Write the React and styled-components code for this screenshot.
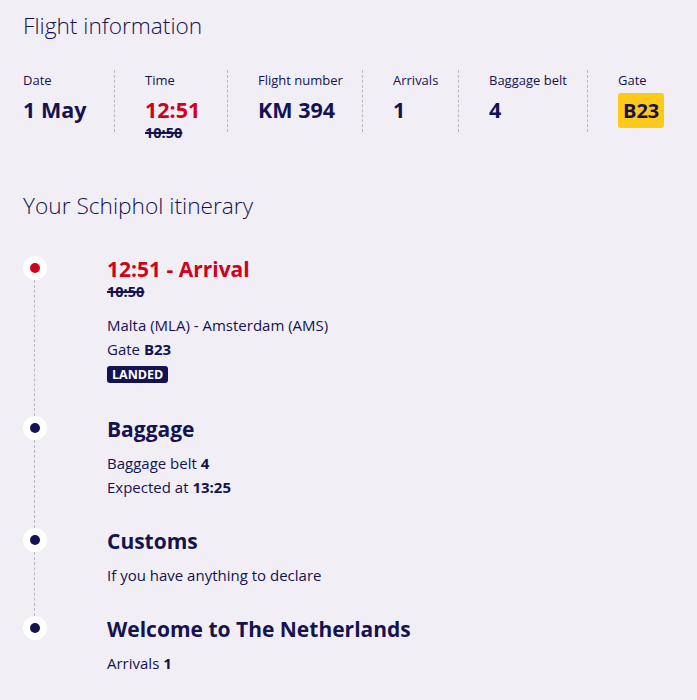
import React from 'react';
import styled, { createGlobalStyle } from 'styled-components';

const GlobalStyle = createGlobalStyle`
  body {
    margin: 0;
    background: #f1eff5;
    color: #141251;
    font-family: 'Open Sans', 'Noto Sans', sans-serif;
  }
`;

const Page = styled.div`
  padding: 10px 23px 24px;
`;

const SectionTitle = styled.h2`
  margin: 0;
  font-size: 22.7px;
  line-height: 32px;
  font-weight: 350;
  color: #141251;
`;

const Stats = styled.div`
  display: grid;
  grid-template-columns: 91px 113px 135px 96px 129px auto;
  margin: 28px 0 48px;
`;

const Stat = styled.div`
  position: relative;
  padding-left: ${(p) => (p.$first ? '0' : '31px')};

  &::before {
    content: '';
    display: ${(p) => (p.$first ? 'none' : 'block')};
    position: absolute;
    left: 0;
    top: 0;
    height: 62px;
    border-left: 1px dashed #b9b7c8;
  }
`;

const Label = styled.div`
  font-size: 13px;
  line-height: 20px;
`;

const Value = styled.div`
  margin-top: 6px;
  font-size: 21.5px;
  line-height: 28px;
  font-weight: 700;
  color: ${(p) => (p.$delayed ? '#d0021b' : '#141251')};
`;

const OldTime = styled.div`
  font-size: 14.5px;
  line-height: 18px;
  font-weight: 700;
  text-decoration: line-through;
  text-decoration-thickness: 2px;
`;

const GateBadge = styled.span`
  display: inline-block;
  margin-top: -4px;
  padding: 4px 5px;
  line-height: 27px;
  font-size: 20px;
  background: #ffc917;
  border-radius: 3px;
`;

const Timeline = styled.div`
  margin-top: 33px;
`;

const Step = styled.div`
  display: grid;
  grid-template-columns: 84px 1fr;
  padding-bottom: ${(p) => (p.$last ? '0' : '28px')};
`;

const Rail = styled.div`
  position: relative;

  &::after {
    content: '';
    display: ${(p) => (p.$last ? 'none' : 'block')};
    position: absolute;
    left: 11px;
    top: 25px;
    bottom: -29px;
    border-left: 1px dashed #b9b7c8;
  }
`;

const Dot = styled.div`
  margin-top: 1px;
  width: 24px;
  height: 24px;
  border-radius: 50%;
  background: #ffffff;
  display: flex;
  align-items: center;
  justify-content: center;

  &::before {
    content: '';
    width: 10px;
    height: 10px;
    border-radius: 50%;
    background: ${(p) => (p.$active ? '#d0021b' : '#141251')};
  }
`;

const StepTitle = styled.h3`
  margin: 0;
  font-size: 21px;
  line-height: 28px;
  font-weight: 700;
  color: ${(p) => (p.$active ? '#d0021b' : '#141251')};
`;

const StepBody = styled.div`
  margin-top: ${(p) => (p.$tight ? '12px' : '8px')};
  font-size: 15px;
  line-height: 24px;

  b {
    font-weight: 700;
  }
`;

const Status = styled.span`
  display: inline-block;
  margin-top: 5px;
  margin-bottom: 4px;
  padding: 0 5px;
  background: #141251;
  color: #ffffff;
  font-size: 12.5px;
  font-weight: 700;
  line-height: 17px;
  border-radius: 3px;
`;

const stats = [
  { label: 'Date', value: '1 May' },
  { label: 'Time', value: '12:51', old: '10:50', delayed: true },
  { label: 'Flight number', value: 'KM 394' },
  { label: 'Arrivals', value: '1' },
  { label: 'Baggage belt', value: '4' },
  { label: 'Gate', value: 'B23', badge: true },
];

export default function App() {
  return (
    <Page>
      <GlobalStyle />
      <SectionTitle>Flight information</SectionTitle>
      <Stats>
        {stats.map((s, i) => (
          <Stat key={s.label} $first={i === 0}>
            <Label>{s.label}</Label>
            <Value $delayed={s.delayed}>
              {s.badge ? <GateBadge>{s.value}</GateBadge> : s.value}
            </Value>
            {s.old && <OldTime>{s.old}</OldTime>}
          </Stat>
        ))}
      </Stats>

      <SectionTitle>Your Schiphol itinerary</SectionTitle>
      <Timeline>
        <Step>
          <Rail><Dot $active /></Rail>
          <div>
            <StepTitle $active>12:51 - Arrival</StepTitle>
            <OldTime>10:50</OldTime>
            <StepBody $tight>
              <div>Malta (MLA) - Amsterdam (AMS)</div>
              <div>Gate <b>B23</b></div>
              <Status>LANDED</Status>
            </StepBody>
          </div>
        </Step>
        <Step>
          <Rail><Dot /></Rail>
          <div>
            <StepTitle>Baggage</StepTitle>
            <StepBody>
              <div>Baggage belt <b>4</b></div>
              <div>Expected at <b>13:25</b></div>
            </StepBody>
          </div>
        </Step>
        <Step>
          <Rail><Dot /></Rail>
          <div>
            <StepTitle>Customs</StepTitle>
            <StepBody>If you have anything to declare</StepBody>
          </div>
        </Step>
        <Step $last>
          <Rail $last><Dot /></Rail>
          <div>
            <StepTitle>Welcome to The Netherlands</StepTitle>
            <StepBody>Arrivals <b>1</b></StepBody>
          </div>
        </Step>
      </Timeline>
    </Page>
  );
}
